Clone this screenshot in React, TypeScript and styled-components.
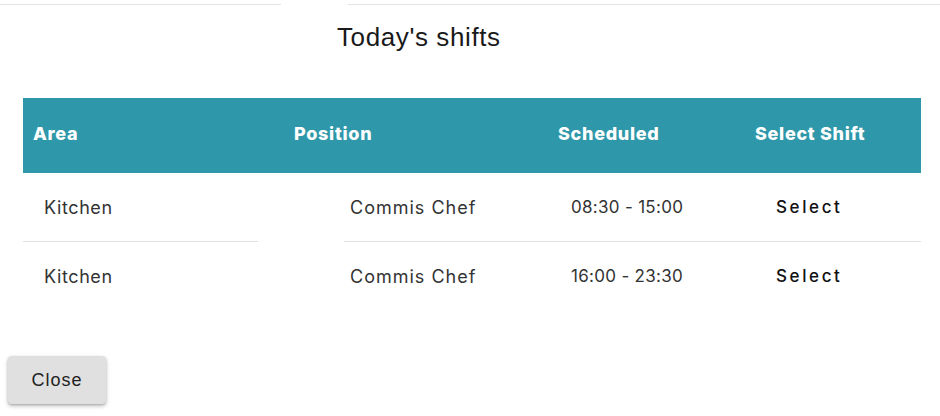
import styled, { createGlobalStyle } from 'styled-components';

const GlobalStyle = createGlobalStyle`
  body {
    margin: 0;
    background: #fff;
    font-family: Inter, "Open Sans", sans-serif;
  }
`;

const Page = styled.div`
  width: 940px;
  height: 416px;
  position: relative;
  overflow: hidden;
  padding-top: 4px;
  box-sizing: border-box;
`;

const TopRule = styled.div`
  display: grid;
  grid-template-columns: 281px 67px 1fr;
  height: 1px;
`;

const RuleSegment = styled.div<{ $visible?: boolean }>`
  background: ${({ $visible }) => ($visible ? '#e2e2e2' : 'transparent')};
`;

const Title = styled.h2`
  margin: 18px 0 0 337px;
  font-family: "Liberation Sans", Arial, sans-serif;
  font-weight: 400;
  font-size: 26px;
  line-height: 28px;
  letter-spacing: 0.6px;
  color: #1a1a1a;
`;

const Table = styled.div`
  margin: 47px 19px 0 23px;
`;

const HeaderRow = styled.div`
  display: grid;
  grid-template-columns: 261px 264px 197px 1fr;
  height: 75px;
  padding-bottom: 4px;
  box-sizing: border-box;
  align-items: center;
  background: #2e97a9;
`;

const HeaderCell = styled.div<{ $pad: number }>`
  padding-left: ${({ $pad }) => $pad}px;
  color: #fff;
  font-family: Inter, sans-serif;
  font-weight: 800;
  font-size: 18px;
  letter-spacing: 0.7px;
`;

const BodyRow = styled.div`
  display: grid;
  grid-template-columns: 235px 86px 221px 206px 1fr;
  height: 69px;
`;

const BodyCell = styled.div<{ $pad?: number; $line?: boolean; $size?: number; $spacing?: number }>`
  display: flex;
  align-items: center;
  padding-left: ${({ $pad }) => $pad ?? 0}px;
  border-bottom: 1px solid ${({ $line }) => ($line ? '#e0e0e0' : 'transparent')};
  color: #333;
  font-family: Inter, sans-serif;
  font-size: ${({ $size }) => $size ?? 18}px;
  letter-spacing: ${({ $spacing }) => $spacing ?? 0.6}px;
`;

const SelectLink = styled.span`
  color: #111;
  font-size: 17px;
  font-weight: 500;
  letter-spacing: 2.6px;
`;

const CloseButton = styled.button`
  position: absolute;
  left: 8px;
  top: 356px;
  width: 98px;
  height: 48px;
  border: none;
  border-radius: 4px;
  background: #e0e0e0;
  box-shadow: 0 2px 4px rgba(0, 0, 0, 0.25), 0 1px 2px rgba(0, 0, 0, 0.15);
  font-family: "Liberation Sans", Arial, sans-serif;
  font-size: 18px;
  letter-spacing: 1px;
  color: #222;
  cursor: pointer;
`;

const shifts = [
  { area: 'Kitchen', position: 'Commis Chef', time: '08:30 - 15:00' },
  { area: 'Kitchen', position: 'Commis Chef', time: '16:00 - 23:30' },
];

export default function App() {
  return (
    <Page>
      <GlobalStyle />
      <TopRule>
        <RuleSegment $visible />
        <RuleSegment />
        <RuleSegment $visible />
      </TopRule>
      <Title>Today's shifts</Title>
      <Table>
        <HeaderRow>
          <HeaderCell $pad={10}>Area</HeaderCell>
          <HeaderCell $pad={10}>Position</HeaderCell>
          <HeaderCell $pad={10}>Scheduled</HeaderCell>
          <HeaderCell $pad={10}>Select Shift</HeaderCell>
        </HeaderRow>
        {shifts.map((s, i) => {
          const line = i < shifts.length - 1;
          return (
            <BodyRow key={i}>
              <BodyCell $pad={21} $line={line}>{s.area}</BodyCell>
              <BodyCell />
              <BodyCell $pad={6} $line={line} $spacing={1}>{s.position}</BodyCell>
              <BodyCell $pad={6} $line={line} $size={17} $spacing={0.3}>{s.time}</BodyCell>
              <BodyCell $pad={5} $line={line}>
                <SelectLink>Select</SelectLink>
              </BodyCell>
            </BodyRow>
          );
        })}
      </Table>
      <CloseButton>Close</CloseButton>
    </Page>
  );
}
